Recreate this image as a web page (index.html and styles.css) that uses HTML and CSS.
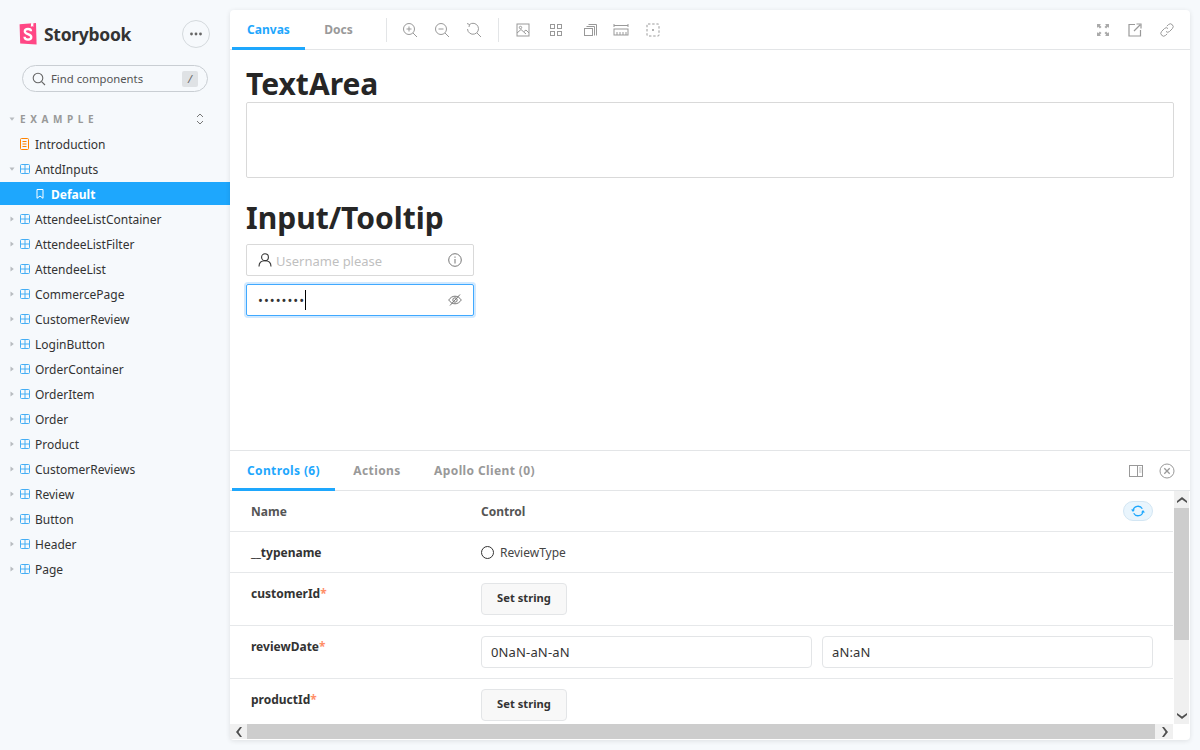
FILE: index.html
```html
<!DOCTYPE html>
<html>
<head>
    <title>Storybook</title>
    <link rel="stylesheet" href="styles.css">
</head>
<body>
    <svg class="icon-defs" width="0" height="0">
        <symbol id="component" viewBox="0 0 10 10">
            <rect x="0.5" y="0.5" width="9" height="9" rx="1" fill="none" stroke="currentColor"/>
            <path d="M5 0.5V9.5M0.5 5H9.5" stroke="currentColor" fill="none"/>
        </symbol>
        <symbol id="caret" viewBox="0 0 6 6">
            <path d="M0.500 1.500H5.500L3 4.800Z" fill="currentColor"/>
        </symbol>
    </svg>

    <aside class="sidebar">
        <div class="brand">
            <div class="logo-wrap">
                <svg class="logo" width="18" height="23" viewBox="0 0 18 23">
                    <path d="M0.6 2.2 L17 1 L17.6 22.4 L1.2 21.6 Z" fill="#ff4785"/>
                    <path d="M12 1.300 L11.900 5 L13.100 4 L14.300 4.900 L14.400 1.100 Z" fill="#fff"/>
                    <path d="M12 9.200C12 7.700 11 7 9 7C7 7 5.800 8 5.800 9.400C5.800 12.500 12.300 11.800 12.300 15.100C12.300 16.700 11 17.700 9 17.700C7 17.700 5.600 16.800 5.500 14.800" fill="none" stroke="#fff" stroke-width="2.300"/>
                </svg>
                <span class="brand-name">Storybook</span>
            </div>
            <button class="menu-button">
                <svg width="14" height="4" viewBox="0 0 14 4"><circle cx="2.500" cy="2" r="1.400"/><circle cx="7" cy="2" r="1.400"/><circle cx="11.500" cy="2" r="1.400"/></svg>
            </button>
        </div>

        <div class="search">
            <svg width="14" height="14" viewBox="0 0 14 14" fill="none" stroke="#666" stroke-width="1.100"><circle cx="6" cy="6" r="4.800"/><path d="M9.600 9.600L13 13"/></svg>
            <span class="search-text">Find components</span>
            <span class="search-key">/</span>
        </div>

        <div class="section-head">
            <svg class="caret" width="6" height="6"><use href="#caret"/></svg>
            <span class="section-title">EXAMPLE</span>
            <svg class="expand" width="8" height="12" viewBox="0 0 8 12" fill="none" stroke="#777" stroke-width="1"><path d="M1 4L4 1L7 4M1 8L4 11L7 8"/></svg>
        </div>

        <div class="tree">
            <div class="tree-row no-caret">
                <svg class="doc" width="9" height="12" viewBox="0 0 9 12" fill="none" stroke="#ff8300"><rect x="0.500" y="0.500" width="8" height="11" rx="1"/><path d="M2.500 3.500H6.500M2.500 6H6.500M2.500 8.500H6.500"/></svg>
                <span>Introduction</span>
            </div>
            <div class="tree-row">
                <svg class="caret" width="6" height="6"><use href="#caret"/></svg>
                <svg class="comp" width="10" height="10"><use href="#component"/></svg>
                <span>AntdInputs</span>
            </div>
            <div class="tree-row selected">
                <svg width="8" height="10" viewBox="0 0 8 10" fill="none" stroke="#fff"><path d="M1 .5H7V9.300L4 7L1 9.300Z"/></svg>
                <span>Default</span>
            </div>
            <div class="tree-row closed"><svg class="caret" width="6" height="6"><use href="#caret"/></svg><svg class="comp" width="10" height="10"><use href="#component"/></svg><span>AttendeeListContainer</span></div>
            <div class="tree-row closed"><svg class="caret" width="6" height="6"><use href="#caret"/></svg><svg class="comp" width="10" height="10"><use href="#component"/></svg><span>AttendeeListFilter</span></div>
            <div class="tree-row closed"><svg class="caret" width="6" height="6"><use href="#caret"/></svg><svg class="comp" width="10" height="10"><use href="#component"/></svg><span>AttendeeList</span></div>
            <div class="tree-row closed"><svg class="caret" width="6" height="6"><use href="#caret"/></svg><svg class="comp" width="10" height="10"><use href="#component"/></svg><span>CommercePage</span></div>
            <div class="tree-row closed"><svg class="caret" width="6" height="6"><use href="#caret"/></svg><svg class="comp" width="10" height="10"><use href="#component"/></svg><span>CustomerReview</span></div>
            <div class="tree-row closed"><svg class="caret" width="6" height="6"><use href="#caret"/></svg><svg class="comp" width="10" height="10"><use href="#component"/></svg><span>LoginButton</span></div>
            <div class="tree-row closed"><svg class="caret" width="6" height="6"><use href="#caret"/></svg><svg class="comp" width="10" height="10"><use href="#component"/></svg><span>OrderContainer</span></div>
            <div class="tree-row closed"><svg class="caret" width="6" height="6"><use href="#caret"/></svg><svg class="comp" width="10" height="10"><use href="#component"/></svg><span>OrderItem</span></div>
            <div class="tree-row closed"><svg class="caret" width="6" height="6"><use href="#caret"/></svg><svg class="comp" width="10" height="10"><use href="#component"/></svg><span>Order</span></div>
            <div class="tree-row closed"><svg class="caret" width="6" height="6"><use href="#caret"/></svg><svg class="comp" width="10" height="10"><use href="#component"/></svg><span>Product</span></div>
            <div class="tree-row closed"><svg class="caret" width="6" height="6"><use href="#caret"/></svg><svg class="comp" width="10" height="10"><use href="#component"/></svg><span>CustomerReviews</span></div>
            <div class="tree-row closed"><svg class="caret" width="6" height="6"><use href="#caret"/></svg><svg class="comp" width="10" height="10"><use href="#component"/></svg><span>Review</span></div>
            <div class="tree-row closed"><svg class="caret" width="6" height="6"><use href="#caret"/></svg><svg class="comp" width="10" height="10"><use href="#component"/></svg><span>Button</span></div>
            <div class="tree-row closed"><svg class="caret" width="6" height="6"><use href="#caret"/></svg><svg class="comp" width="10" height="10"><use href="#component"/></svg><span>Header</span></div>
            <div class="tree-row closed"><svg class="caret" width="6" height="6"><use href="#caret"/></svg><svg class="comp" width="10" height="10"><use href="#component"/></svg><span>Page</span></div>
        </div>
    </aside>

    <main class="main">
        <div class="toolbar">
            <div class="tab active tab-canvas">Canvas</div>
            <div class="tab tab-docs">Docs</div>
            <div class="divider"></div>
            <div class="tools">
                <svg width="16" height="16" viewBox="0 0 16 16"><circle cx="7" cy="7" r="5.500"/><path d="M11 11L15 15M7 4.500V9.500M4.500 7H9.500"/></svg>
                <svg width="16" height="16" viewBox="0 0 16 16"><circle cx="7" cy="7" r="5.500"/><path d="M11 11L15 15M4.500 7H9.500"/></svg>
                <svg width="16" height="16" viewBox="0 0 16 16"><path d="M3.500 2.500A5.500 5.500 0 1 1 1.500 7M1 1.500L3.500 2.500L3 5M11 11L15 15"/></svg>
            </div>
            <div class="divider divider-second"></div>
            <div class="tools tools-wide">
                <svg width="14" height="14" viewBox="0 0 14 14"><rect x="1" y="1" width="12" height="12"/><circle cx="4.500" cy="4.500" r="1.200"/><path d="M1 10L5 6.500L10 11M8 8.500L10 7L13 10"/></svg>
                <svg class="tool-grid" width="14" height="14" viewBox="0 0 14 14"><rect x="1.500" y="1.500" width="4" height="4"/><rect x="8.500" y="1.500" width="4" height="4"/><rect x="1.500" y="8.500" width="4" height="4"/><rect x="8.500" y="8.500" width="4" height="4"/></svg>
                <svg class="tool-outline" width="14" height="14" viewBox="0 0 14 14"><rect x="1.500" y="5.500" width="8" height="7"/><path d="M3.500 3.500H11.500V12.500M5.500 1.500H13.500V12.500"/></svg>
                <svg class="tool-ruler" width="16" height="14" viewBox="0 0 16 14"><rect x="1" y="6" width="14" height="6"/><path d="M1 2.500H15M1 1V4M15 1V4M4 9V12M7 9V12M10 9V12M13 9V12"/></svg>
                <svg width="14" height="14" viewBox="0 0 14 14"><rect x="1" y="1" width="12" height="12" rx="1" stroke-dasharray="2.400 1.800"/><path d="M6 7H8M7 6V8"/></svg>
            </div>
            <div class="tools tools-right">
                <svg width="14" height="14" viewBox="0 0 14 14"><path d="M1 1H5L3.800 2.200L5.500 3.900L3.900 5.500L2.200 3.800L1 5ZM13 1V5L11.800 3.800L10.100 5.500L8.500 3.900L10.200 2.200L9 1ZM1 13V9L2.200 10.200L3.900 8.500L5.500 10.100L3.800 11.800L5 13ZM13 13H9L10.200 11.800L8.500 10.100L10.100 8.500L11.800 10.200L13 9Z" class="solid"/></svg>
                <svg width="14" height="14" viewBox="0 0 14 14"><path d="M7 1.500H1V13H12.500V7M6 8L12 2M8.500 1H13V5.500" stroke-width="1.200"/></svg>
                <svg width="14" height="14" viewBox="0 0 14 14"><path d="M6 8.500A2.500 2.500 0 0 0 9.500 8.500L12.300 5.700A2.500 2.500 0 0 0 8.300 1.700L6.800 3.200M8 5.500A2.500 2.500 0 0 0 4.500 5.500L1.700 8.300A2.500 2.500 0 0 0 5.700 12.300L7.200 10.800"/></svg>
            </div>
        </div>

        <div class="canvas">
            <h1 class="title-first">TextArea</h1>
            <div class="textarea"></div>
            <h1 class="title-second">Input/Tooltip</h1>
            <div class="input-box">
                <svg class="user" width="14" height="14" viewBox="0 0 14 14" fill="none" stroke="#333" stroke-width="1.100"><circle cx="7" cy="4.200" r="3.400"/><path d="M1 13.500C1 10 3.500 7.800 7 7.800S13 10 13 13.500"/></svg>
                <span class="placeholder">Username please</span>
                <svg class="suffix" width="14" height="14" viewBox="0 0 14 14" fill="none" stroke="#777"><circle cx="7" cy="7" r="6.300"/><path d="M7 6V10.500M7 3.500V4.800"/></svg>
            </div>
            <div class="input-box focused">
                <span class="dots">••••••••</span><span class="cursor"></span>
                <svg class="suffix" width="14" height="14" viewBox="0 0 14 14" fill="none" stroke="#777"><path d="M.7 7C2.500 4.500 4.500 3.200 7 3.200S11.500 4.500 13.300 7C11.500 9.500 9.500 10.800 7 10.800S2.500 9.500 .7 7Z"/><circle cx="7" cy="7" r="2.200"/><path d="M2 12.500L12 1.500"/></svg>
            </div>
        </div>

        <div class="panel">
            <div class="panel-tabs">
                <div class="tab active tab-controls">Controls (6)</div>
                <div class="tab tab-actions">Actions</div>
                <div class="tab tab-apollo">Apollo Client (0)</div>
                <div class="tools tools-right tools-panel">
                    <svg width="14" height="12" viewBox="0 0 14 12"><rect x="0.500" y="0.500" width="13" height="11"/><path d="M8.500 .5V11.500"/><path d="M10 3H12.500M10 5H12.500M10 7H12.500" stroke="#bbb"/></svg>
                    <svg width="16" height="16" viewBox="0 0 16 16"><circle cx="8" cy="8" r="7"/><path d="M5.300 5.300L10.700 10.700M10.700 5.300L5.300 10.700" stroke-width="1.300"/></svg>
                </div>
            </div>
            <div class="panel-body">
                <div class="table-scroll">
                    <div class="args-row head-row">
                        <div class="name-col">Name</div>
                        <div class="control-col">Control</div>
                        <button class="reset-button">
                            <svg width="14" height="12" viewBox="0 0 14 12" fill="none" stroke="#1ea7fd" stroke-width="1.300"><path d="M2 5.500A5 5 0 0 1 11.300 3.800M12 6.500A5 5 0 0 1 2.700 8.200"/><path d="M0 4.500H4L2 7ZM10 7.500H14L12 5Z" fill="#1ea7fd" stroke="none"/></svg>
                        </button>
                    </div>
                    <div class="args-row row-small">
                        <div class="name-col strong">__typename</div>
                        <div class="control-col radio-wrap"><span class="radio"></span><span class="radio-label">ReviewType</span></div>
                    </div>
                    <div class="args-row row-tall">
                        <div class="name-col strong">customerId<span class="req">*</span></div>
                        <div class="control-col"><button class="set-button">Set string</button></div>
                    </div>
                    <div class="args-row row-tall">
                        <div class="name-col strong">reviewDate<span class="req">*</span></div>
                        <div class="control-col date-wrap">
                            <div class="field">0NaN-aN-aN</div>
                            <div class="field">aN:aN</div>
                        </div>
                    </div>
                    <div class="args-row row-tall">
                        <div class="name-col strong">productId<span class="req">*</span></div>
                        <div class="control-col"><button class="set-button">Set string</button></div>
                    </div>
                </div>
                <div class="scroll-v">
                    <div class="scroll-btn"><svg width="10" height="6" viewBox="0 0 10 6"><path d="M0 4L5 0L10 4V6L5 2.500L0 6Z"/></svg></div>
                    <div class="thumb-v"></div>
                    <div class="scroll-btn bottom"><svg width="10" height="6" viewBox="0 0 10 6"><path d="M0 2L5 6L10 2V0L5 3.500L0 0Z"/></svg></div>
                </div>
                <div class="scroll-h">
                    <div class="scroll-btn"><svg width="6" height="10" viewBox="0 0 6 10"><path d="M4 0L0 5L4 10H6L2.500 5L6 0Z"/></svg></div>
                    <div class="thumb-h"></div>
                    <div class="scroll-btn"><svg width="6" height="10" viewBox="0 0 6 10"><path d="M2 0L6 5L2 10H0L3.500 5L0 0Z"/></svg></div>
                </div>
            </div>
        </div>
    </main>
</body>
</html>
```

FILE: styles.css
```css
* {
  box-sizing: border-box;
}

html, body {
  margin: 0;
  height: 750px;
  overflow: hidden;
}

body {
  display: flex;
  background-color: #f6f9fc;
  font-family: "Noto Sans", "Open Sans", sans-serif;
  color: #333333;
}

.icon-defs {
  position: absolute;
}

/* sidebar */
.sidebar {
  width: 230px;
  flex: none;
}

.brand {
  display: flex;
  justify-content: space-between;
  align-items: center;
  padding: 20px 20px 0 20px;
  height: 48px;
}

.logo-wrap {
  display: flex;
  align-items: center;
  gap: 6px;
}

.logo {
  margin: -2px 0 0 -1px;
}

.brand-name {
  margin-left: 1px;
  font-size: 17.5px;
  font-weight: 700;
  color: #333333;
  letter-spacing: -0.3px;
}

.menu-button {
  width: 28px;
  height: 28px;
  padding: 0;
  border: 1px solid #d4d9dd;
  border-radius: 50%;
  background: transparent;
  display: flex;
  align-items: center;
  justify-content: center;
}

.menu-button svg {
  fill: #666666;
}

.search {
  display: flex;
  align-items: center;
  margin: 17px 22px 0 22px;
  height: 27px;
  padding: 0 9px;
  border: 1px solid #c9ced3;
  border-radius: 14px;
}

.search-text {
  margin-left: 5px;
  font-size: 11.3px;
  color: #555555;
  flex: 1;
}

.search-key {
  width: 16px;
  height: 16px;
  border-radius: 2px;
  background-color: #dfe2e5;
  color: #666666;
  font-size: 11px;
  font-style: italic;
  text-align: center;
  line-height: 16px;
}

.section-head {
  display: flex;
  align-items: center;
  height: 20px;
  margin-top: 17px;
  padding: 0 26px 0 9px;
}

.caret {
  color: #b8bcc0;
  flex: none;
}

.section-title {
  margin-left: 5px;
  flex: 1;
  font-size: 10px;
  font-weight: 700;
  letter-spacing: 4.6px;
  color: #999999;
}

.tree {
  margin-top: 3px;
}

.tree-row {
  display: flex;
  align-items: center;
  height: 23px;
  margin-bottom: 2px;
  padding-left: 9px;
  padding-top: 2px;
  font-size: 12px;
  color: #333333;
}

.tree-row svg {
  margin-top: -2px;
}

.tree-row .comp {
  margin-left: 5px;
  color: #45aef5;
  flex: none;
}

.tree-row span {
  margin-left: 5px;
}

.tree-row.no-caret {
  padding-left: 20px;
}

.tree-row.no-caret span {
  margin-left: 6px;
}

.tree-row.closed .caret {
  transform: rotate(-90deg);
}

.tree-row.selected {
  padding-left: 36px;
  background-color: #1ea7fd;
  color: #ffffff;
  font-weight: 700;
}

.tree-row.selected span {
  margin-left: 7px;
}

/* main area */
.main {
  width: 960px;
  height: 730px;
  margin-top: 10px;
  background-color: #ffffff;
  border-radius: 4px;
  box-shadow: 0 1px 5px rgba(0, 0, 0, 0.1);
  display: flex;
  flex-direction: column;
  overflow: hidden;
}

.toolbar {
  display: flex;
  align-items: center;
  height: 40px;
  flex: none;
  padding-left: 2px;
  border-bottom: 1px solid #e3e5e7;
}

.tab {
  height: 40px;
  display: flex;
  align-items: center;
  justify-content: center;
  font-size: 12px;
  font-weight: 700;
  color: #999999;
  border-bottom: 3px solid transparent;
  padding-top: 3px;
}

.tab.active {
  color: #1ea7fd;
  border-bottom-color: #1ea7fd;
}

.tab-canvas {
  width: 73px;
}

.tab-docs {
  width: 67px;
  margin-left: 0;
}

.divider {
  width: 1px;
  height: 24px;
  margin-left: 14px;
  background-color: #e3e5e7;
}

.divider-second {
  margin-left: 16px;
}

.tools {
  display: flex;
  align-items: center;
  gap: 16px;
  padding-left: 15px;
}

.tools svg {
  fill: none;
  stroke: #999999;
  stroke-width: 1;
}

.tools svg .solid {
  fill: #aaaaaa;
  stroke: none;
}

.tools-wide {
  gap: 17px;
  padding-left: 17px;
}

.tool-grid {
  margin-left: 2px;
}

.tool-outline {
  margin-left: 3px;
}

.tool-ruler {
  margin-left: -1px;
}

.tools-right {
  margin-left: auto;
  padding-right: 16px;
  gap: 18px;
}

/* canvas */
.canvas {
  height: 401px;
  flex: none;
  padding: 16px 16px 0 16px;
  border-bottom: 1px solid #e3e5e7;
}

.canvas h1 {
  margin: 0;
  font-size: 30px;
  line-height: 36px;
  font-weight: 700;
  color: #262626;
}

.textarea {
  height: 76px;
  border: 1px solid #d9d9d9;
  border-radius: 2px;
}

.title-second {
  margin-top: 22px !important;
}

.input-box {
  position: relative;
  display: flex;
  align-items: center;
  width: 228px;
  height: 32px;
  margin-top: 8px;
  padding: 0 11px;
  border: 1px solid #d9d9d9;
  border-radius: 2px;
  font-size: 13px;
}

.title-second + .input-box {
  margin-top: 8px;
}

.input-box.focused {
  border-color: #40a9ff;
  box-shadow: 0 0 0 2px rgba(24, 144, 255, 0.2);
}

.placeholder {
  margin-left: 4px;
  padding-top: 2px;
  color: #bfbfbf;
}

.suffix {
  margin-left: auto;
}

.dots {
  font-size: 13px;
  letter-spacing: 1px;
  color: #333333;
}

.cursor {
  width: 1px;
  height: 20px;
  background-color: #000000;
}

/* addons panel */
.panel {
  flex: 1;
  min-height: 0;
  display: flex;
  flex-direction: column;
}

.panel-tabs {
  display: flex;
  align-items: center;
  height: 40px;
  flex: none;
  padding-left: 2px;
  border-bottom: 1px solid #e3e5e7;
}

.panel-tabs .tab {
  letter-spacing: 0.38px;
}

.tab-controls {
  width: 103px;
}

.tab-actions {
  width: 84px;
}

.tab-apollo {
  width: 131px;
  margin-left: 0;
}

.tools-panel {
  gap: 16px;
  padding-right: 15px;
}

.panel-body {
  flex: 1;
  min-height: 0;
  display: grid;
  grid-template-columns: 1fr 16px;
  grid-template-rows: 1fr 16px;
}

.table-scroll {
  overflow: hidden;
  min-height: 0;
  margin-right: 1px;
}

.args-row {
  display: flex;
  margin: 0 0 0 0;
  padding-left: 21px;
  border-bottom: 1px solid #e6e8ea;
  font-size: 12px;
}

.head-row {
  height: 41px;
  align-items: center;
  position: relative;
  font-weight: 700;
  color: #555555;
}

.row-small {
  height: 41px;
  align-items: center;
}

.row-tall {
  height: 53px;
  padding-top: 10px;
}

.row-tall .name-col {
  padding-top: 2px;
}

.name-col {
  width: 230px;
  flex: none;
}

.strong {
  font-weight: 700;
  color: #333333;
}

.req {
  color: #ff4400;
  opacity: 0.6;
}

.control-col {
  flex: 1;
}

.reset-button {
  position: absolute;
  top: 10px;
  right: 20px;
  width: 30px;
  height: 20px;
  padding: 0;
  display: flex;
  align-items: center;
  justify-content: center;
  background-color: #e9f5fd;
  border: 1px solid #d3e6f3;
  border-radius: 10px;
}

.radio-wrap {
  display: flex;
  align-items: center;
}

.radio {
  width: 13px;
  height: 13px;
  border: 1px solid #333333;
  border-radius: 50%;
}

.radio-label {
  margin-left: 6px;
  color: #444444;
}

.set-button {
  width: 86px;
  height: 32px;
  padding: 0 0 3px 0;
  background-color: #f8f8f8;
  border: 1px solid #e3e5e7;
  border-radius: 4px;
  font-family: inherit;
  font-size: 11.2px;
  font-weight: 700;
  color: #333333;
}

.date-wrap {
  display: flex;
  gap: 10px;
  padding-right: 20px;
}

.field {
  flex: 1;
  height: 32px;
  line-height: 30px;
  padding: 0 9px;
  border: 1px solid #e3e5e7;
  border-radius: 4px;
  font-size: 13px;
  letter-spacing: 0.15px;
  color: #333333;
}

.scroll-v {
  display: flex;
  flex-direction: column;
  width: 15px;
  background-color: #f0f0f0;
}

.thumb-v {
  height: 132px;
  background-color: #cdcdcd;
}

.scroll-btn {
  display: flex;
  align-items: center;
  justify-content: center;
  width: 15px;
  height: 17px;
  flex: none;
}

.scroll-btn svg {
  fill: #505050;
}

.scroll-btn.bottom {
  margin-top: auto;
}

.scroll-h {
  display: flex;
  height: 15px;
  margin-right: 1px;
  background-color: #f0f0f0;
  grid-column: 1;
}

.scroll-h .scroll-btn {
  width: 17px;
  height: 15px;
}

.thumb-h {
  flex: 1;
  margin-right: 1px;
  background-color: #cdcdcd;
}
```
